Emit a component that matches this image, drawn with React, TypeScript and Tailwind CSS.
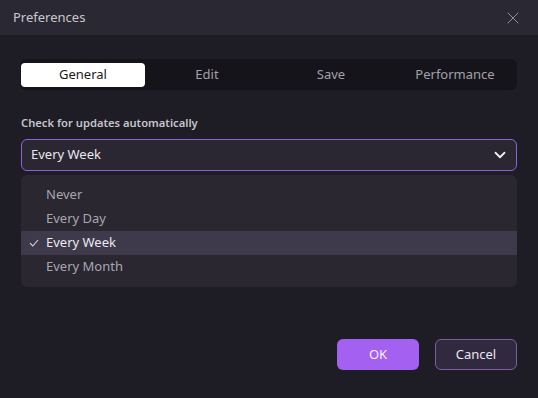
import { X, ChevronDown } from "lucide-react";

const tabs = ["General", "Edit", "Save", "Performance"];
const options = ["Never", "Every Day", "Every Week", "Every Month"];

const App = () => {
  const selected = "Every Week";
  return (
    <div
      className="w-[538px] h-[398px] bg-[#1e1c25] flex flex-col text-[#e4e2e8]"
      style={{ fontFamily: '"Noto Sans", "Open Sans", sans-serif' }}
    >
      {/* title bar */}
      <div className="h-[35px] bg-[#2a2832] flex items-center justify-between pl-[13px] pr-[15px] shrink-0">
        <span className="text-[13px] text-[#c9c7cf]">Preferences</span>
        <X size={20} strokeWidth={1} className="text-[#a9a6b0]" />
      </div>

      <div className="flex-1 flex flex-col px-[21px] pt-[24px] pb-[28px]">
        {/* tabs */}
        <div className="h-[31px] bg-[#15141a] rounded-md flex items-center -ml-px py-1">
          {tabs.map((t, i) => (
            <div
              key={t}
              className={
                i === 0
                  ? "flex-1 h-[24px] ml-px rounded-[4px] bg-white text-[#1a1a1a] text-[13px] flex items-center justify-center"
                  : "flex-1 h-[24px] text-[#a3a0aa] text-[13px] flex items-center justify-center"
              }
            >
              {t}
            </div>
          ))}
        </div>

        <div className="mt-[24px] text-[11.2px] leading-[18px] font-semibold text-[#c6c4cc]">
          Check for updates automatically
        </div>

        {/* select */}
        <div className="mt-[7px] h-[32px] rounded-md border border-[#9160d4] bg-[#2a2733] flex items-center justify-between pl-[9px] pr-[7px]">
          <span className="text-[13px] text-[#ebe9ee]">{selected}</span>
          <ChevronDown size={18} strokeWidth={2.4} className="text-[#f0eef3]" />
        </div>

        {/* dropdown */}
        <div className="mt-[4px] rounded-md bg-[#2a2731] py-[8px]">
          {options.map((o) => (
            <div
              key={o}
              className={
                o === selected
                  ? "h-[24px] bg-[#3e3a4b] flex items-center text-[13px] text-[#ece9f0]"
                  : "h-[24px] flex items-center text-[13px] text-[#a9a6b0]"
              }
            >
              <span className="w-[25px] flex justify-center">
                {o === selected && (
                  <svg width="10" height="8" viewBox="0 0 10 8" fill="none">
                    <path d="M1 4.2 L3.8 7 L9 1" stroke="#d8d5dd" strokeWidth="1.1" />
                  </svg>
                )}
              </span>
              <span>{o}</span>
            </div>
          ))}
        </div>

        {/* buttons */}
        <div className="mt-auto flex justify-end gap-[16px]">
          <button className="w-[82px] h-[31px] rounded-md bg-[#a461f1] text-[13px] text-[#f6efff]">
            OK
          </button>
          <button className="w-[82px] h-[31px] rounded-md bg-[#312940] border border-[#7c5e9c] text-[13px] text-[#e8e6ec]">
            Cancel
          </button>
        </div>
      </div>
    </div>
  );
};

export default App;
